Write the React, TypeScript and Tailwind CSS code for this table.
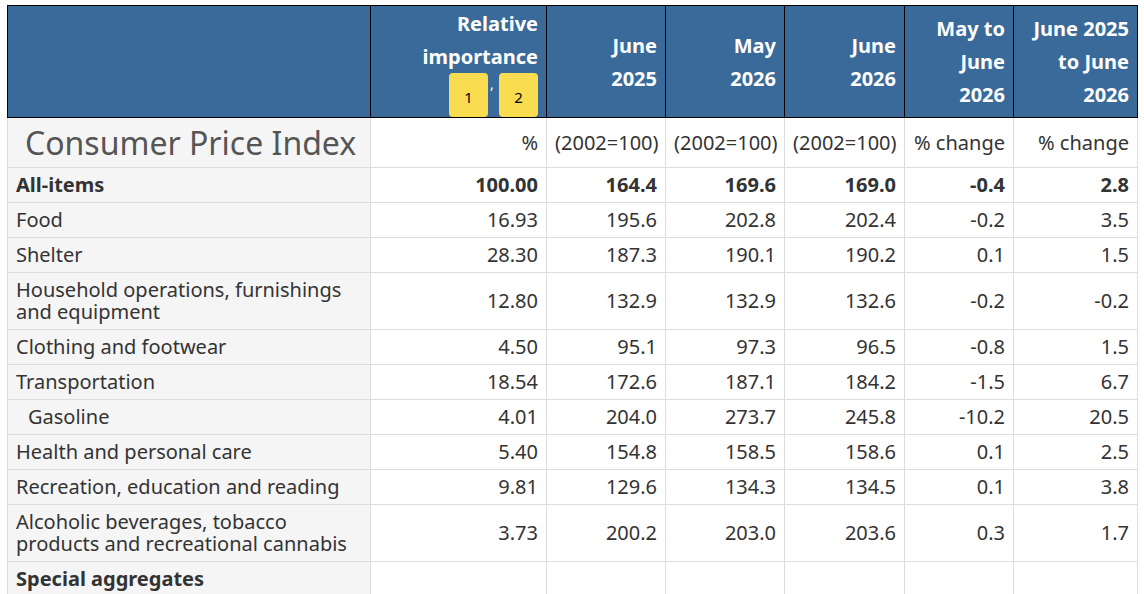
const rows: { label: string; values: string[]; bold?: boolean; indent?: boolean }[] = [
  { label: 'All-items', values: ['100.00', '164.4', '169.6', '169.0', '-0.4', '2.8'], bold: true },
  { label: 'Food', values: ['16.93', '195.6', '202.8', '202.4', '-0.2', '3.5'] },
  { label: 'Shelter', values: ['28.30', '187.3', '190.1', '190.2', '0.1', '1.5'] },
  {
    label: 'Household operations, furnishings and equipment',
    values: ['12.80', '132.9', '132.9', '132.6', '-0.2', '-0.2'],
  },
  { label: 'Clothing and footwear', values: ['4.50', '95.1', '97.3', '96.5', '-0.8', '1.5'] },
  { label: 'Transportation', values: ['18.54', '172.6', '187.1', '184.2', '-1.5', '6.7'] },
  { label: 'Gasoline', values: ['4.01', '204.0', '273.7', '245.8', '-10.2', '20.5'], indent: true },
  { label: 'Health and personal care', values: ['5.40', '154.8', '158.5', '158.6', '0.1', '2.5'] },
  { label: 'Recreation, education and reading', values: ['9.81', '129.6', '134.3', '134.5', '0.1', '3.8'] },
  {
    label: 'Alcoholic beverages, tobacco products and recreational cannabis',
    values: ['3.73', '200.2', '203.0', '203.6', '0.3', '1.7'],
  },
];

const units = ['%', '(2002=100)', '(2002=100)', '(2002=100)', '% change', '% change'];

const head = 'border border-black bg-[#3a6a9a] text-white font-bold text-right align-middle px-2 py-[6px] leading-[33px]';
const cell = 'border border-[#ddd] px-2 py-[6px] leading-[22px] text-right align-middle whitespace-nowrap';
const side = 'border border-[#ddd] bg-[#f5f5f5] px-2 py-[6px] leading-[22px] text-left align-middle';

function Badge({ n }: { n: string }) {
  return (
    <span className="flex h-[44px] w-[39px] items-center justify-center rounded-[4px] bg-[#f9dc4f] pt-[4px] text-[15px] leading-none font-normal text-black">
      {n}
    </span>
  );
}

export default function App() {
  return (
    <div className="min-h-screen bg-white pl-[7px] pt-[5px] text-[20px] text-[#333]" style={{ fontFamily: '"Noto Sans", "Open Sans", sans-serif' }}>
      <table className="table-fixed border-collapse w-[1130px]">
        <colgroup>
          <col className="w-[363px]" />
          <col className="w-[176px]" />
          <col className="w-[119px]" />
          <col className="w-[119px]" />
          <col className="w-[120px]" />
          <col className="w-[109px]" />
          <col className="w-[124px]" />
        </colgroup>
        <thead>
          <tr>
            <th className={head}></th>
            <th className="border border-black bg-[#3a6a9a] text-white font-bold text-right align-bottom px-2 pt-0 pb-0 leading-[33px]">
              <div>Relative</div>
              <div>importance</div>
              <div className="flex justify-end gap-[2px]">
                <Badge n="1" />
                <span className="mt-[4px] w-[7px] text-left text-[14px] leading-none font-normal text-white">,</span>
                <Badge n="2" />
              </div>
            </th>
            <th className={head}>
              June
              <br />
              2025
            </th>
            <th className={head}>
              May
              <br />
              2026
            </th>
            <th className={head}>
              June
              <br />
              2026
            </th>
            <th className={head}>
              May to
              <br />
              June
              <br />
              2026
            </th>
            <th className={head}>
              June 2025
              <br />
              to June
              <br />
              2026
            </th>
          </tr>
        </thead>
        <tbody>
          <tr>
            <th className="border border-[#ddd] bg-[#f5f5f5] pl-[17px] pr-0 py-[6px] text-left text-[32px] leading-[37px] font-normal text-[#555] whitespace-nowrap">
              Consumer Price Index
            </th>
            {units.map((u, i) => (
              <td key={i} className={cell}>
                {u}
              </td>
            ))}
          </tr>
          {rows.map((r) => (
            <tr key={r.label} className={r.bold ? 'font-bold' : ''}>
              <th className={`${side} ${r.bold ? 'font-bold' : 'font-normal'} ${r.indent ? 'pl-[20px]' : ''}`}>{r.label}</th>
              {r.values.map((v, i) => (
                <td key={i} className={cell}>
                  {v}
                </td>
              ))}
            </tr>
          ))}
          <tr>
            <th className={`${side} font-bold`}>Special aggregates</th>
            {units.map((_, i) => (
              <td key={i} className={cell}></td>
            ))}
          </tr>
        </tbody>
      </table>
    </div>
  );
}
